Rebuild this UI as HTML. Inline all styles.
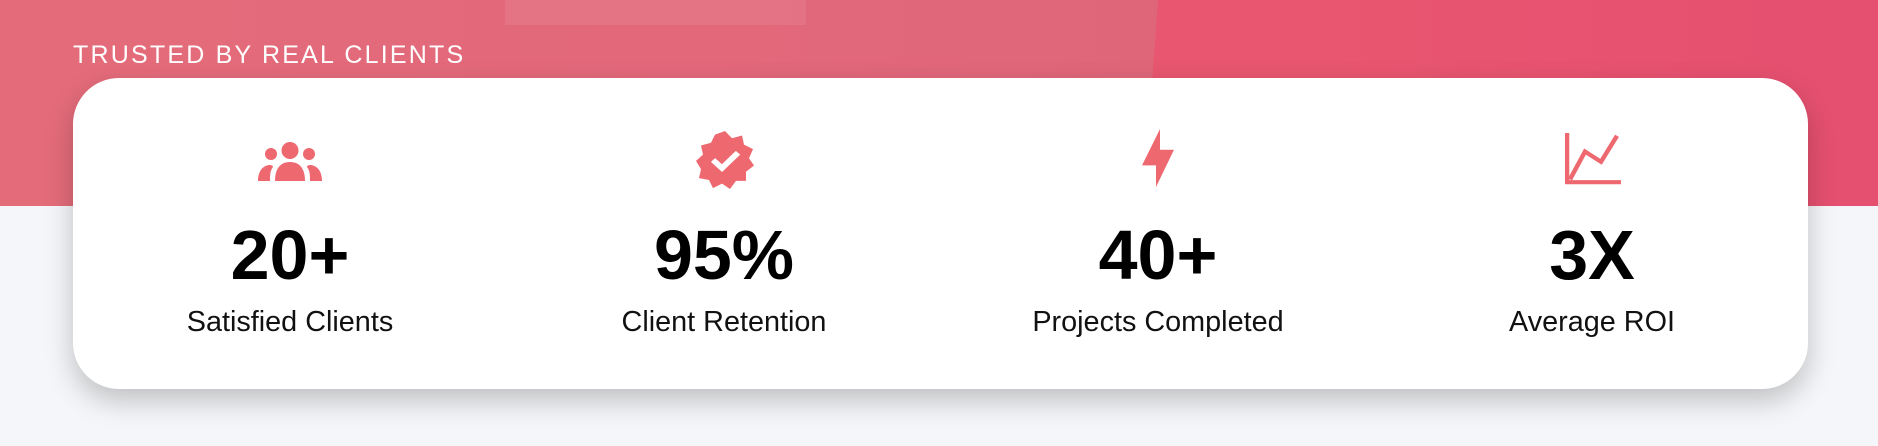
<!DOCTYPE html>
<html><head><meta charset="utf-8"><style>
html,body{margin:0;padding:0;}
body{width:1878px;height:446px;position:relative;overflow:hidden;background:#f4f6f9;font-family:"Liberation Sans",Arial,sans-serif;}
.band{position:absolute;left:0;top:0;width:1878px;height:206px;background:linear-gradient(90deg,#e9586f 0%,#e8566f 70%,#e54f70 100%);}
.ov{position:absolute;left:0;top:0;width:1160px;height:206px;background:linear-gradient(90deg,#e46c7a 0%,#e2687a 60%,#df6679 100%);clip-path:polygon(0 0,1158px 0,1143px 206px,0 206px);}
.rect{position:absolute;left:505px;top:0;width:301px;height:25px;background:rgba(255,255,255,0.08);}
.hd{position:absolute;left:73px;top:41px;color:#fff;font-size:25px;letter-spacing:2.2px;}
.card{position:absolute;left:73px;top:78px;width:1735px;height:311px;background:#fff;border-radius:46px;box-shadow:0 12px 28px rgba(0,0,0,0.22);}
.col{position:absolute;top:0;width:434px;height:311px;text-align:center;}
.col svg{position:absolute;}
.num{position:absolute;left:0;right:0;top:141px;font-size:70px;font-weight:bold;color:#000;line-height:72px;}
.lbl{position:absolute;left:0;right:0;top:228px;font-size:28.8px;color:#111;line-height:32px;}
</style></head><body>
<div class="band"><div class="ov"></div><div class="rect"></div></div>
<div class="hd">TRUSTED BY REAL CLIENTS</div>
<div class="card">
 <div class="col" style="left:0">
  <svg style="left:185px;top:64px" width="64" height="39" viewBox="0 0 64 39" fill="#ee6870">
   <circle cx="32" cy="8.5" r="8.5"/><circle cx="13" cy="12" r="6"/><circle cx="51" cy="12" r="6"/>
   <path d="M17 39 C17 27 22 20 32 20 C42 20 47 27 47 39 Z"/>
   <path d="M0 39 C0 30 4 24 11 23 C14 23 15 24 15 25 C12 29 12 33 12 39 Z"/>
   <path d="M64 39 C64 30 60 24 53 23 C50 23 49 24 49 25 C52 29 52 33 52 39 Z"/>
  </svg>
  <div class="num">20+</div><div class="lbl">Satisfied Clients</div>
 </div>
 <div class="col" style="left:434px">
  <svg style="left:189px;top:53px" width="58" height="58" viewBox="0 0 58 64" preserveAspectRatio="none">
   <path fill="#ee6870" d="M29 0 L36 8 L46 5 L48 15 L57 20 L53 30 L58 38 L50 45 L50 55 L40 55 L34 64 L26 58 L17 63 L13 54 L3 52 L5 42 L0 33 L7 26 L5 16 L15 13 L19 4 Z"/>
   <path fill="none" stroke="#fff" stroke-width="6" d="M17 32 L26 41 L42 24"/>
  </svg>
  <div class="num">95%</div><div class="lbl">Client Retention</div>
 </div>
 <div class="col" style="left:868px">
  <svg style="left:201px;top:51px" width="32" height="58" viewBox="0 0 32 67" preserveAspectRatio="none" fill="#ee6870">
   <path d="M18 0 L18 24 L32 24 L14 67 L14 42 L0 42 Z"/>
  </svg>
  <div class="num">40+</div><div class="lbl">Projects Completed</div>
 </div>
 <div class="col" style="left:1302px">
  <svg style="left:190px;top:55px" width="56" height="52" viewBox="0 0 56 56" preserveAspectRatio="none" fill="none" stroke="#ee6870" stroke-width="4.5">
   <path d="M2 0 V53 H56"/>
   <path d="M5 50 L20 20 L36 31 L52 3"/>
  </svg>
  <div class="num">3X</div><div class="lbl">Average ROI</div>
 </div>
</div>
</body></html>
